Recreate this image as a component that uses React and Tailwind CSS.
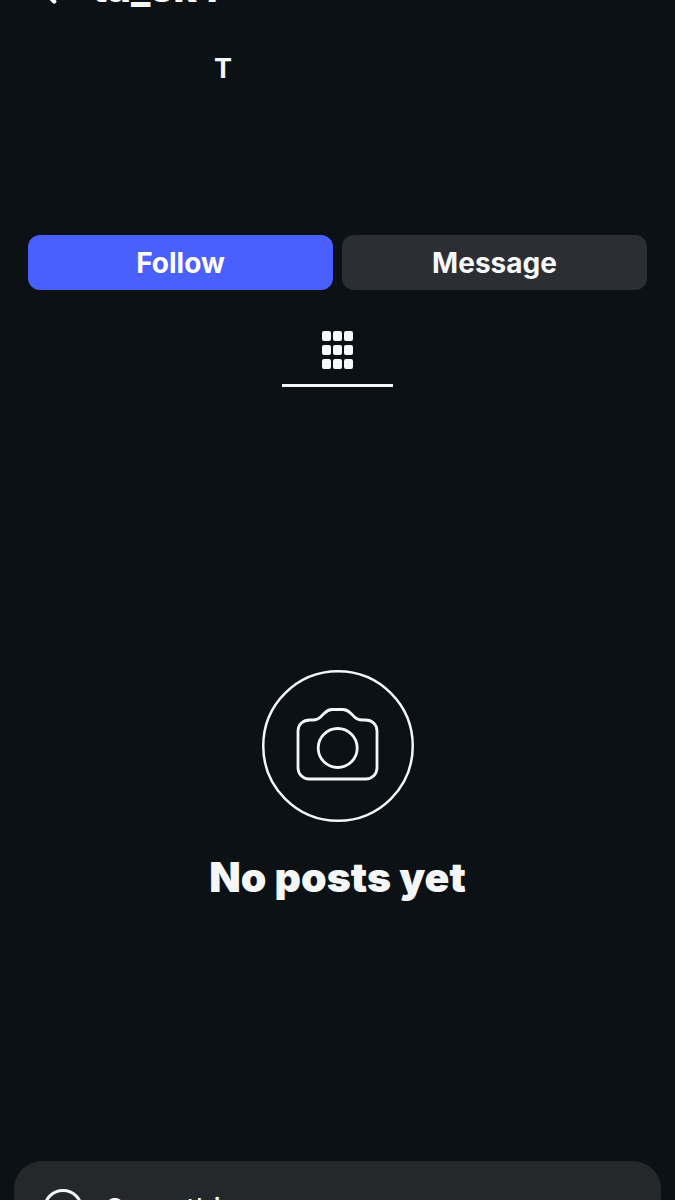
import { ChevronLeft } from "lucide-react";

function CameraIcon() {
  return (
    <svg width="152" height="152" viewBox="0 0 152 152" fill="none" stroke="#f5f6f7">
      <circle cx="76" cy="76" r="74.75" strokeWidth="2.5" />
      <path
        d="M48 50h3c3 0 5.500-1 7.500-3l3.500-3.500c2.500-2.500 4.500-4 8-4h11c3.500 0 5.500 1.500 8 4l3.500 3.500c2 2 4.500 3 7.500 3h3.500c6.500 0 11.500 4.500 11.500 11v37c0 6-5 11-11 11H47c-6 0-11-5-11-11V61c0-6.500 5-11 12-11Z"
        strokeWidth="2.800"
        strokeLinejoin="round"
      />
      <circle cx="75.700" cy="78" r="19.500" strokeWidth="2.800" />
    </svg>
  );
}

function GridIcon() {
  const cells = [0, 1, 2, 3, 4, 5, 6, 7, 8];
  return (
    <div className="grid grid-cols-3 gap-x-[2px] gap-y-[4px]">
      {cells.map((c) => (
        <div key={c} className="h-[10px] w-[9px] rounded-[2px] bg-[#f7f8f9]" />
      ))}
    </div>
  );
}

export default function App() {
  return (
    <div className="h-[1200px] overflow-hidden bg-[#0b1115] font-['Inter','Liberation_Sans',sans-serif] text-[#f7f8f9]">
      <div className="-mt-[25px] flex h-[36px] items-center pl-[33px]">
        <ChevronLeft size={34} strokeWidth={3} className="text-white" />
        <span className="mb-[11px] ml-[25px] text-[40px] font-extrabold leading-none">ta_skY</span>
      </div>

      <div className="mt-[43px] pl-[214px] text-[27px] font-bold leading-[30px]">T</div>

      <div className="mt-[151px] flex gap-[9px] px-[28px]">
        <button className="h-[55px] flex-1 rounded-[12px] bg-[#4a60fe] text-[28px] font-bold text-white">
          Follow
        </button>
        <button className="h-[55px] flex-1 rounded-[12px] bg-[#2b2f35] text-[28px] font-bold text-[#f7f8f9]">
          Message
        </button>
      </div>

      <div className="mt-[41px] flex justify-center">
        <div className="flex w-[111px] flex-col items-center border-b-[3px] border-[#f7f8f9] pb-[15px]">
          <GridIcon />
        </div>
      </div>

      <div className="mt-[283px] flex flex-col items-center">
        <CameraIcon />
        <h2 className="mt-[30px] text-[41px] font-black leading-[50px] text-[#f5f6f7]">No posts yet</h2>
      </div>

      <div className="mx-[14px] mt-[259px] flex h-[80px] rounded-t-[28px] bg-[#25282a] pl-[29px] pt-[28px]">
        <div className="h-[40px] w-[40px] shrink-0 rounded-full border-[3px] border-[#f7f8f9]" />
        <span className="ml-[22px] mt-[2px] text-[30px] leading-[36px] text-[#f7f8f9]">Something</span>
      </div>
    </div>
  );
}
